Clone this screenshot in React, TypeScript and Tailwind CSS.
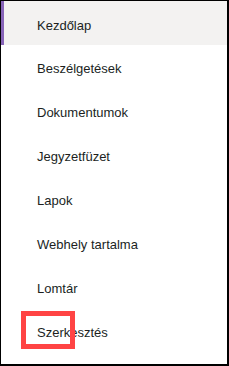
const NAV_ITEMS = [
  "Kezdőlap",
  "Beszélgetések",
  "Dokumentumok",
  "Jegyzetfüzet",
  "Lapok",
  "Webhely tartalma",
  "Lomtár",
  "Szerkesztés",
];

export default function App() {
  return (
    <div className="relative h-[366px] w-[229px] overflow-hidden border-t border-l border-r-2 border-b-2 border-black bg-white font-['Liberation_Sans',Arial,sans-serif] text-[13px] text-[#201f1e]">
      <nav className="flex flex-col">
        {NAV_ITEMS.map((label, i) => (
          <div
            key={label}
            className={
              i === 0
                ? "flex h-[44px] items-center border-l-[3px] border-[#8764b8] bg-[#f3f2f1] pl-[33px]"
                : "flex h-[44px] items-center pl-[36px]"
            }
          >
            <span className={i === 0 ? "relative top-[3px]" : "relative top-[2px]"}>{label}</span>
          </div>
        ))}
      </nav>
      <div className="pointer-events-none absolute left-[20px] top-[310px] h-[38px] w-[54px] border-[5px] border-[#ff4444]" />
    </div>
  );
}
